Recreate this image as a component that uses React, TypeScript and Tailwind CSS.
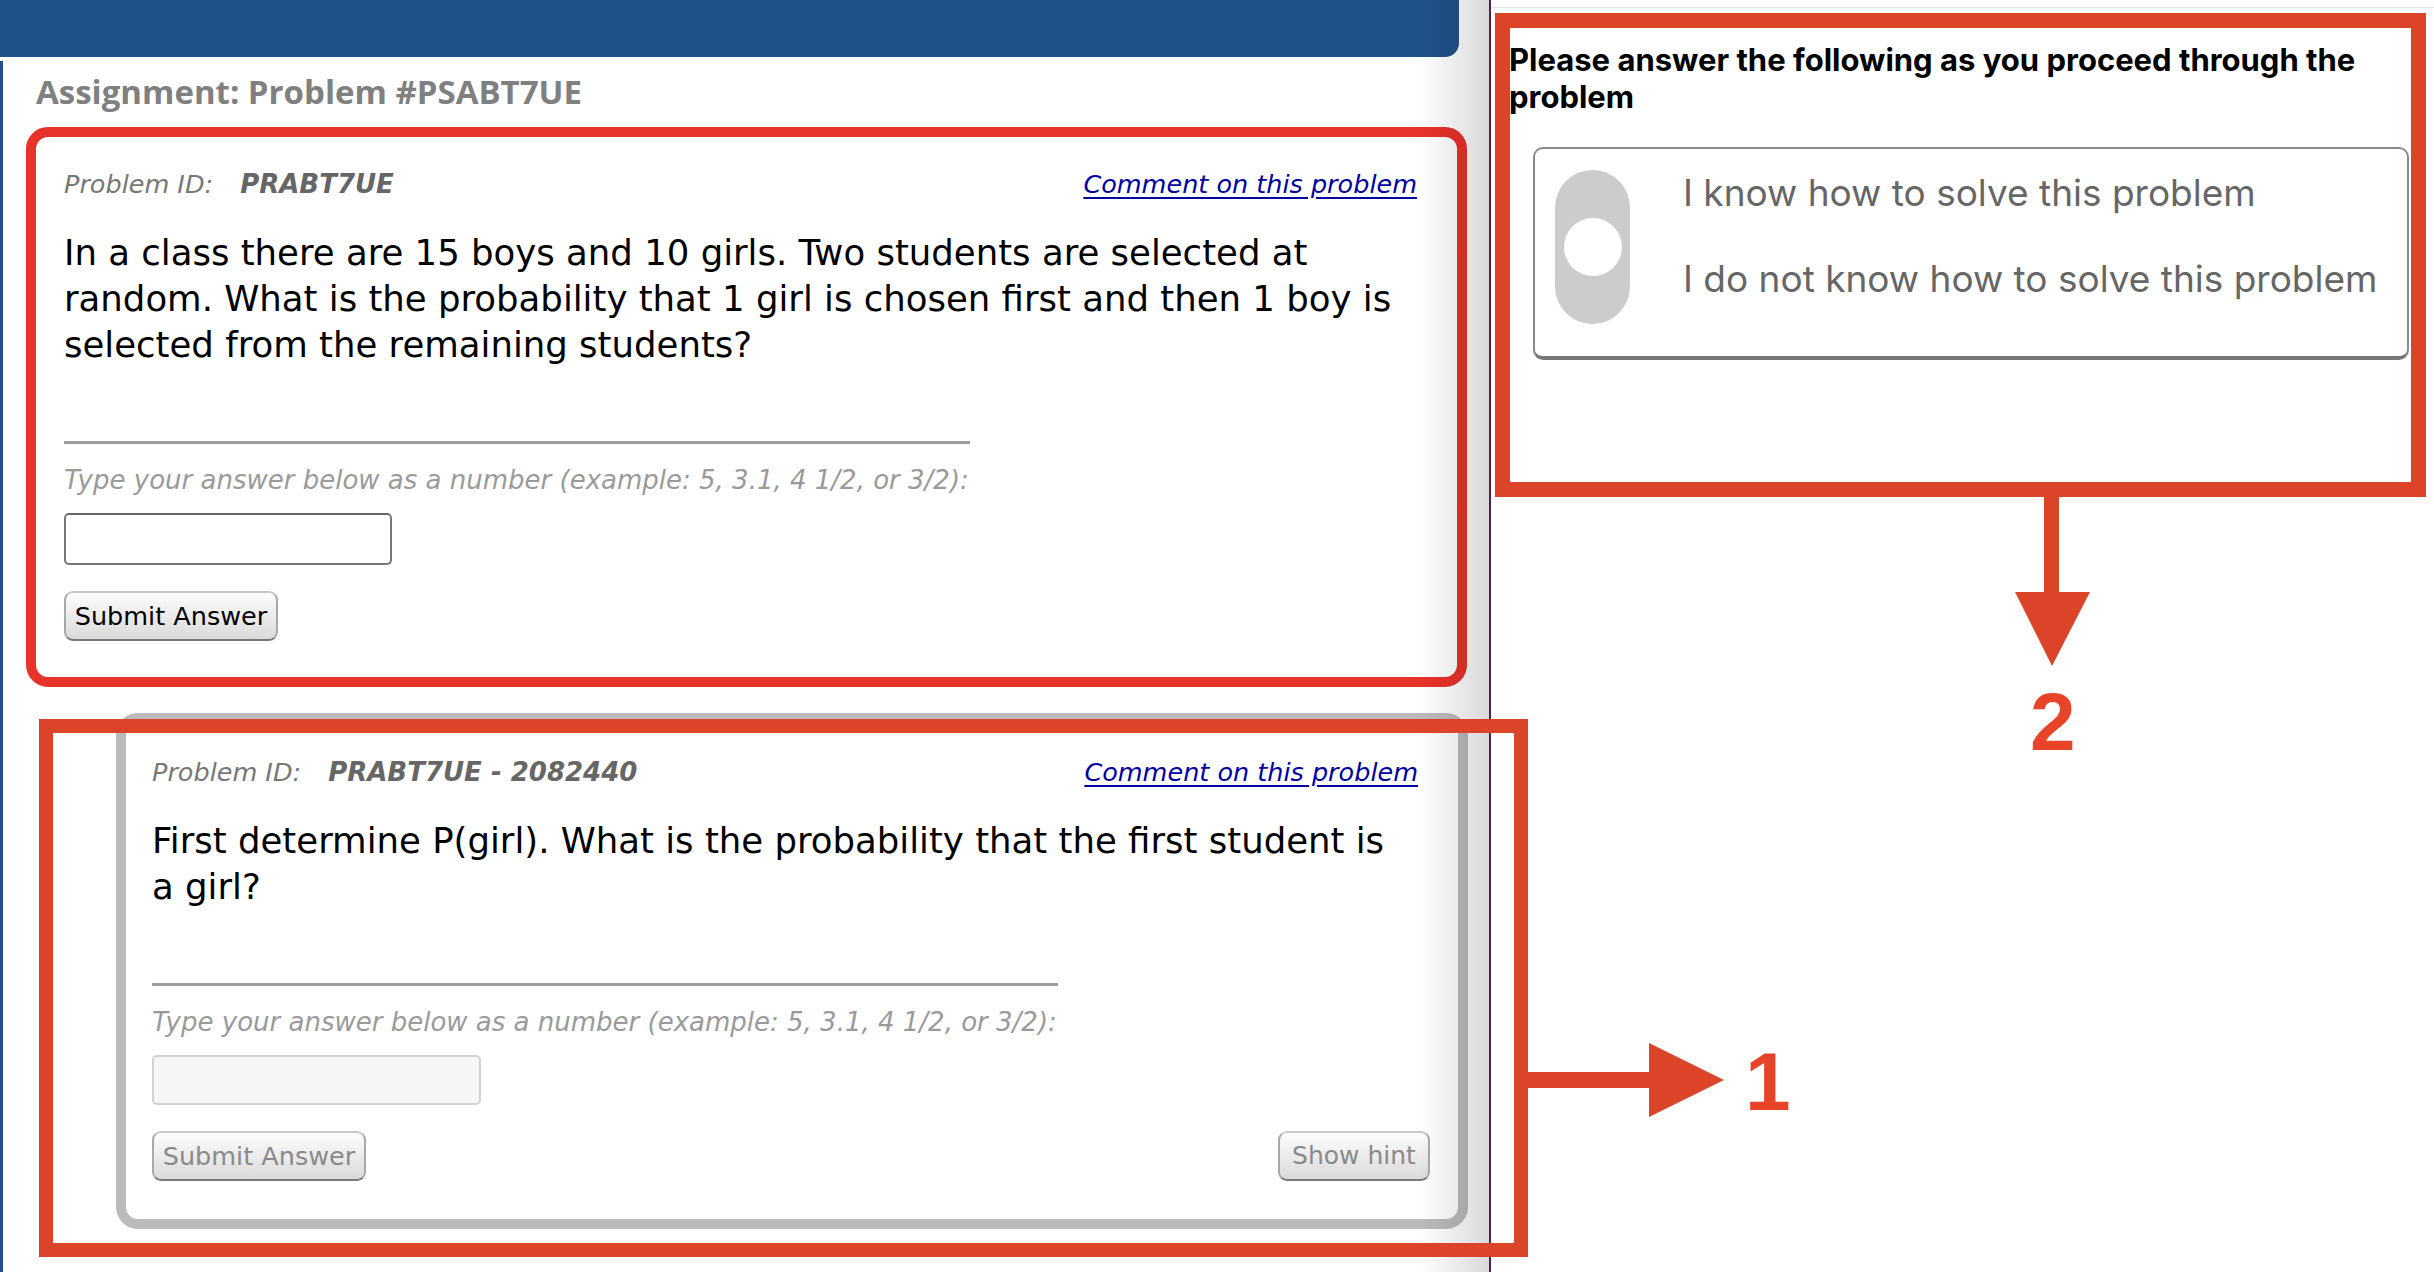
import React from 'react';

type ProblemProps = {
  problemId: string;
  question: string;
  disabled?: boolean;
  showHint?: boolean;
  questionWidth?: string;
  className: string;
};

function ProblemCard({ problemId, question, disabled, showHint, questionWidth = '', className }: ProblemProps) {
  return (
    <div className={`rounded-[22px] border-[10px] bg-white font-['DejaVu_Sans',sans-serif] ${className}`}>
      <div className="flex items-baseline justify-between leading-[38px]">
        <div className="flex items-baseline">
          <span className="text-[25.5px] italic text-[#777]">Problem ID:</span>
          <span className="ml-[27px] text-[26px] font-bold italic text-[#666]">{problemId}</span>
        </div>
        <a href="#" className="mr-[12px] text-[25.5px] italic text-[#0000a0] underline underline-offset-[4px]">
          Comment on this problem
        </a>
      </div>

      <p className={`mt-[27px] text-[35.5px] leading-[46px] text-black ${questionWidth}`}>{question}</p>

      <div className="mt-[73px] h-[3px] w-[906px] bg-[#9c9c9c]" />
      <p className="mt-[17px] text-[26px] italic leading-[38px] text-[#9a9a9a]">
        Type your answer below as a number (example: 5, 3.1, 4 1/2, or 3/2):
      </p>

      <input
        disabled={disabled}
        className={
          disabled
            ? 'mt-[14px] block h-[50px] w-[329px] rounded-[5px] border-2 border-[#d2d2d2] bg-[#f6f6f6]'
            : 'mt-[14px] block h-[52px] w-[328px] rounded-[5px] border-2 border-[#777] border-t-[#666] bg-white'
        }
      />

      <div className="mt-[26px] flex items-center justify-between">
        <button
          disabled={disabled}
          className={`h-[50px] w-[214px] rounded-[9px] border-2 border-[#a8a8a8] border-t-[#c8c8c8] border-b-[#7a7a7a] bg-gradient-to-b from-[#fdfdfd] to-[#dadada] text-[25.5px] ${
            disabled ? 'text-[#8a8a8a]' : 'text-black'
          }`}
        >
          Submit Answer
        </button>
        {showHint && (
          <button className="h-[50px] w-[152px] rounded-[9px] border-2 border-[#a8a8a8] border-t-[#c8c8c8] border-b-[#7a7a7a] bg-gradient-to-b from-[#fdfdfd] to-[#dadada] text-[25px] text-[#8a8a8a]">
            Show hint
          </button>
        )}
      </div>
    </div>
  );
}

function LeftColumn() {
  return (
    <div className="relative flex h-full w-[1489px] shrink-0 flex-col">
      <div className="h-[57px] w-[1459px] rounded-br-[14px] bg-[#21518b]" />
      <div className="mt-[4px] flex-1 border-l-[3px] border-[#21518b] pl-[23px] pr-[22px]">
        <h1 className="mt-[8px] pl-[10px] font-['Open_Sans',sans-serif] text-[33px] font-bold leading-[46px] text-[#808080]">
          Assignment: Problem #PSABT7UE
        </h1>
        <ProblemCard
          className="mt-[12px] border-[#e8332a] px-[28px] pt-[28px] pb-[36px]"
          problemId="PRABT7UE"
          question="In a class there are 15 boys and 10 girls. Two students are selected at random. What is the probability that 1 girl is chosen first and then 1 boy is selected from the remaining students?"
        />
        <ProblemCard
          className="mt-[26px] ml-[90px] mr-[-1px] border-[#bbbbbb] pl-[26px] pr-[28px] pt-[30px] pb-[38px]"
          problemId="PRABT7UE - 2082440"
          question="First determine P(girl). What is the probability that the first student is a girl?"
          questionWidth="w-[1252px]"
          disabled
          showHint
        />
      </div>
      {/* frame shadow along the right edge */}
      <div className="pointer-events-none absolute inset-y-0 right-0 w-[70px] bg-gradient-to-r from-transparent to-black/15" />
    </div>
  );
}

function RightPanel() {
  return (
    <div className="flex-1 font-['Inter',sans-serif]">
      <div className="h-[8px] border-b border-[#e4e4e4]" />
      <div className="pl-[18px] pr-[30px]">
        <h2 className="mt-[33px] w-[900px] text-[31px] font-bold leading-[37px] text-black">
          Please answer the following as you proceed through the problem
        </h2>
        <div className="mt-[32px] ml-[24px] flex h-[213px] rounded-[10px] border-2 border-b-4 border-[#8a8a8a] border-b-[#777] pl-[20px] pt-[21px]">
          <div className="flex h-[154px] w-[75px] shrink-0 items-center justify-center rounded-full bg-[#cccccc]">
            <div className="h-[58px] w-[58px] rounded-full bg-white" />
          </div>
          <div className="ml-[53px] flex flex-col gap-[42px] pt-[1px] text-[37px] leading-[44px] text-[#666]">
            <span>I know how to solve this problem</span>
            <span>I do not know how to solve this problem</span>
          </div>
        </div>
      </div>
    </div>
  );
}

function Callouts() {
  return (
    <>
      <svg className="pointer-events-none absolute inset-0 h-full w-full" viewBox="0 0 2434 1272">
        <rect x="46" y="726" width="1475" height="524" fill="none" stroke="#db4429" strokeWidth="14" />
        <rect x="1521" y="1072" width="129" height="16" fill="#db4429" />
        <polygon points="1649,1043 1724,1080 1649,1117" fill="#db4429" />
        <rect x="1502.5" y="20.5" width="916" height="469" fill="none" stroke="#db4429" strokeWidth="15" />
        <rect x="2044" y="490" width="15" height="103" fill="#db4429" />
        <polygon points="2015,592 2090,592 2052,666" fill="#db4429" />
      </svg>
      <span className="absolute left-[1745px] top-[1041px] font-['Liberation_Sans',sans-serif] text-[82px] font-bold leading-none text-[#e8442a]">
        1
      </span>
      <span className="absolute left-[2030px] top-[681px] font-['Liberation_Sans',sans-serif] text-[82px] font-bold leading-none text-[#e8442a]">
        2
      </span>
    </>
  );
}

export default function App() {
  return (
    <div className="relative flex h-screen w-full overflow-hidden bg-white">
      <LeftColumn />
      <div className="w-[2px] shrink-0 bg-[#571d4c]" />
      <RightPanel />
      <Callouts />
    </div>
  );
}
